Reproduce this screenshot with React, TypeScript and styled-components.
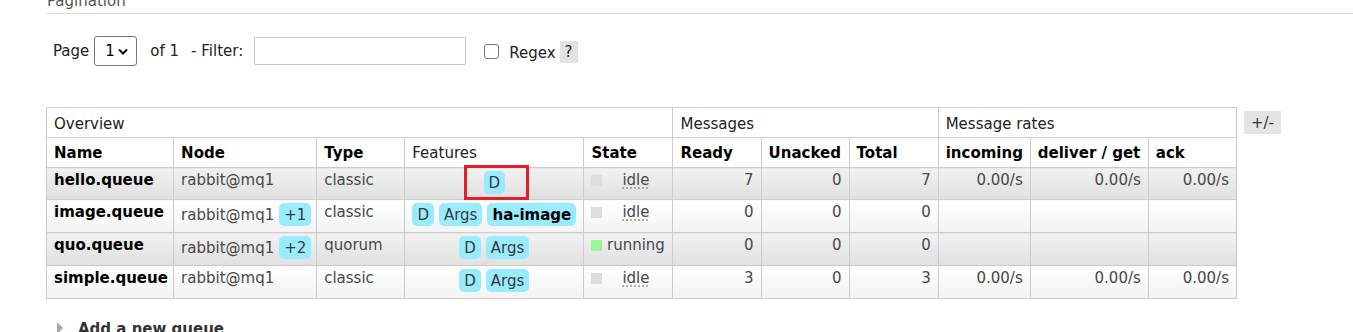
import React from "react";
import styled, { createGlobalStyle, css } from "styled-components";

const GlobalStyle = createGlobalStyle`
  html, body {
    margin: 0;
    padding: 0;
    background: #ffffff;
    overflow: hidden;
  }
  body {
    font-family: "DejaVu Sans", Verdana, sans-serif;
    font-size: 15px;
    color: #484848;
  }
`;

const Page = styled.div`
  width: 1353px;
  height: 332px;
  overflow: hidden;
`;

const Section = styled.section`
  margin-left: 46px;
`;

const SectionTitle = styled.h2`
  margin: -8px 0 0;
  padding: 0 0 3px 1px;
  font-size: 15px;
  font-weight: normal;
  line-height: 18px;
  color: #555;
  border-bottom: 1px solid #dddddd;
`;

const Controls = styled.div`
  display: flex;
  align-items: center;
  height: 30px;
  margin-top: 22px;
  padding-left: 7px;
  line-height: 18px;
  color: #222;
`;

const Label = styled.span<{ $ml?: number; $mt?: number }>`
  margin-left: ${(p) => p.$ml ?? 0}px;
  margin-top: ${(p) => p.$mt ?? 0}px;
  white-space: nowrap;
`;

const SelectBox = styled.label`
  margin-left: 5px;
  width: 43px;
  height: 30px;
  box-sizing: border-box;
  border: 1px solid #767676;
  border-radius: 3px;
  display: flex;
  align-items: center;
  justify-content: space-between;
  padding: 0 8px 0 10px;
  background: #fff;
`;

const NativeSelect = styled.select`
  appearance: none;
  border: none;
  background: transparent;
  padding: 0;
  margin: 0;
  font: inherit;
  color: #000;
  width: 10px;
  outline: none;
`;

const FilterInput = styled.input`
  margin-left: 11px;
  width: 212px;
  height: 28px;
  box-sizing: border-box;
  border: 1px solid #c8c8c8;
  border-radius: 1px;
  padding: 0 4px;
  font: inherit;
  background: #fff;
`;

const CheckBox = styled.input`
  appearance: none;
  margin: 0 0 0 18px;
  width: 15px;
  height: 15px;
  box-sizing: border-box;
  border: 1px solid #767676;
  border-radius: 3px;
  background: #fff;
`;

const HelpTag = styled.span`
  margin-left: 4px;
  margin-top: 2px;
  background: #e2e2e2;
  padding: 2px 5px;
  line-height: 18px;
  color: #222;
`;

const TableRow = styled.div`
  display: flex;
  align-items: flex-start;
  margin-top: 41px;
`;

const QueueTable = styled.table`
  border-collapse: collapse;
  table-layout: fixed;
  width: 1191px;
`;

const cellBorder = css`
  border: 1px solid #cccccc;
`;

const GroupTh = styled.th`
  ${cellBorder};
  padding: 7px 7px 4px;
  line-height: 18px;
  font-weight: normal;
  text-align: left;
  color: #222;
  background: #fff;
`;

const ColTh = styled.th<{ $plain?: boolean }>`
  ${cellBorder};
  padding: 6px 7px 5px;
  line-height: 18px;
  font-weight: ${(p) => (p.$plain ? "normal" : "bold")};
  text-align: left;
  color: ${(p) => (p.$plain ? "#222" : "#000")};
  background: #fff;
  white-space: nowrap;
`;

const Tr = styled.tr<{ $alt: 1 | 2; $h: number }>`
  height: ${(p) => p.$h}px;
  & > td {
    background: ${(p) =>
      p.$alt === 1
        ? "linear-gradient(#f1f1f1, #e0e0e0)"
        : "linear-gradient(#ffffff, #f3f3f3)"};
  }
`;

const Td = styled.td<{ $align?: "left" | "right" | "center"; $strong?: boolean }>`
  ${cellBorder};
  padding: 3px 7px 0;
  vertical-align: top;
  line-height: 18px;
  text-align: ${(p) => p.$align ?? "left"};
  font-weight: ${(p) => (p.$strong ? "bold" : "normal")};
  color: ${(p) => (p.$strong ? "#000" : "#484848")};
  white-space: nowrap;
  overflow: visible;
`;

const Badge = styled.span<{ $bold?: boolean }>`
  display: inline-block;
  background: #99ebff;
  border-radius: 5px;
  padding: 4px 5px 2px;
  line-height: 17px;
  color: ${(p) => (p.$bold ? "#000" : "#3a3a3a")};
  font-weight: ${(p) => (p.$bold ? "bold" : "normal")};
  & + & {
    margin-left: 5px;
  }
`;

const NodeBadge = styled(Badge)`
  margin-left: 5px;
`;

const Highlight = styled.span`
  position: relative;
  display: inline-block;
  &::after {
    content: "";
    position: absolute;
    top: -6px;
    bottom: -6px;
    left: -20px;
    right: -24px;
    border: 3px solid #e41e26;
    box-sizing: border-box;
    pointer-events: none;
  }
`;

const StateWrap = styled.div`
  display: flex;
  align-items: flex-start;
`;

const StateDot = styled.span<{ $color: string }>`
  flex: none;
  width: 11px;
  height: 11px;
  margin-top: 4px;
  background: ${(p) => p.$color};
`;

const StateText = styled.abbr<{ $dotted?: boolean }>`
  flex: 1;
  margin-left: 4px;
  text-align: center;
  text-decoration: ${(p) => (p.$dotted ? "underline dotted #999" : "none")};
  text-underline-offset: 3px;
`;

const ToggleButton = styled.span`
  margin-left: 7px;
  margin-top: 4px;
  background: #e4e4e4;
  padding: 3px 7px 2px;
  line-height: 18px;
  color: #333;
`;

const Collapsed = styled.h2`
  display: flex;
  align-items: flex-start;
  margin: 21px 0 0;
  padding-left: 11px;
  font-size: 15px;
  font-weight: bold;
  line-height: 18px;
  color: #333;
`;

const Arrow = styled.span`
  width: 0;
  height: 0;
  margin-top: 2px;
  margin-right: 15px;
  border-left: 6px solid #a8a8a8;
  border-top: 6px solid transparent;
  border-bottom: 6px solid transparent;
`;

type Feature = { t: string; bold?: boolean; highlight?: boolean };
type Row = {
  name: string;
  extra?: string;
  type: string;
  features: Feature[];
  state: "idle" | "running";
  ready: number;
  unacked: number;
  total: number;
  rates?: string[];
  alt: 1 | 2;
  h: number;
};

const rows: Row[] = [
  {
    name: "hello.queue",
    type: "classic",
    features: [{ t: "D", highlight: true }],
    state: "idle",
    ready: 7,
    unacked: 0,
    total: 7,
    rates: ["0.00/s", "0.00/s", "0.00/s"],
    alt: 1,
    h: 32,
  },
  {
    name: "image.queue",
    extra: "+1",
    type: "classic",
    features: [{ t: "D" }, { t: "Args" }, { t: "ha-image", bold: true }],
    state: "idle",
    ready: 0,
    unacked: 0,
    total: 0,
    alt: 2,
    h: 33,
  },
  {
    name: "quo.queue",
    extra: "+2",
    type: "quorum",
    features: [{ t: "D" }, { t: "Args" }],
    state: "running",
    ready: 0,
    unacked: 0,
    total: 0,
    alt: 1,
    h: 33,
  },
  {
    name: "simple.queue",
    type: "classic",
    features: [{ t: "D" }, { t: "Args" }],
    state: "idle",
    ready: 3,
    unacked: 0,
    total: 3,
    rates: ["0.00/s", "0.00/s", "0.00/s"],
    alt: 2,
    h: 33,
  },
];

const colWidths = [127, 143, 88, 179, 89, 88, 88, 89, 92, 118, 88];

export default function App() {
  return (
    <Page>
      <GlobalStyle />
      <Section>
        <SectionTitle>Pagination</SectionTitle>
        <Controls>
          <Label>Page</Label>
          <SelectBox>
            <NativeSelect defaultValue="1">
              <option value="1">1</option>
            </NativeSelect>
            <svg width="10" height="7" viewBox="0 0 10 7">
              <polyline
                points="1,1.5 5,5.5 9,1.5"
                fill="none"
                stroke="#111"
                strokeWidth="2"
              />
            </svg>
          </SelectBox>
          <Label $ml={13}>of 1</Label>
          <Label $ml={12}>- Filter:</Label>
          <FilterInput type="text" />
          <CheckBox type="checkbox" />
          <Label $ml={10} $mt={4}>
            Regex
          </Label>
          <HelpTag>?</HelpTag>
        </Controls>

        <TableRow>
          <QueueTable>
            <colgroup>
              {colWidths.map((w, i) => (
                <col key={i} style={{ width: w }} />
              ))}
            </colgroup>
            <thead>
              <tr>
                <GroupTh colSpan={5}>Overview</GroupTh>
                <GroupTh colSpan={3}>Messages</GroupTh>
                <GroupTh colSpan={3}>Message rates</GroupTh>
              </tr>
              <tr>
                <ColTh>Name</ColTh>
                <ColTh>Node</ColTh>
                <ColTh>Type</ColTh>
                <ColTh $plain>Features</ColTh>
                <ColTh>State</ColTh>
                <ColTh>Ready</ColTh>
                <ColTh>Unacked</ColTh>
                <ColTh>Total</ColTh>
                <ColTh>incoming</ColTh>
                <ColTh>deliver / get</ColTh>
                <ColTh>ack</ColTh>
              </tr>
            </thead>
            <tbody>
              {rows.map((r) => (
                <Tr key={r.name} $alt={r.alt} $h={r.h}>
                  <Td $strong>{r.name}</Td>
                  <Td>
                    rabbit@mq1
                    {r.extra && <NodeBadge>{r.extra}</NodeBadge>}
                  </Td>
                  <Td>{r.type}</Td>
                  <Td $align="center">
                    {r.features.map((f) =>
                      f.highlight ? (
                        <Highlight key={f.t}>
                          <Badge>{f.t}</Badge>
                        </Highlight>
                      ) : (
                        <Badge key={f.t} $bold={f.bold}>
                          {f.t}
                        </Badge>
                      )
                    )}
                  </Td>
                  <Td>
                    <StateWrap>
                      <StateDot
                        $color={r.state === "running" ? "#98f898" : "#dddddd"}
                      />
                      <StateText
                        $dotted={r.state === "idle"}
                        title={r.state}
                      >
                        {r.state}
                      </StateText>
                    </StateWrap>
                  </Td>
                  <Td $align="right">{r.ready}</Td>
                  <Td $align="right">{r.unacked}</Td>
                  <Td $align="right">{r.total}</Td>
                  <Td $align="right">{r.rates?.[0] ?? ""}</Td>
                  <Td $align="right">{r.rates?.[1] ?? ""}</Td>
                  <Td $align="right">{r.rates?.[2] ?? ""}</Td>
                </Tr>
              ))}
            </tbody>
          </QueueTable>
          <ToggleButton>+/-</ToggleButton>
        </TableRow>

        <Collapsed>
          <Arrow />
          Add a new queue
        </Collapsed>
      </Section>
    </Page>
  );
}
